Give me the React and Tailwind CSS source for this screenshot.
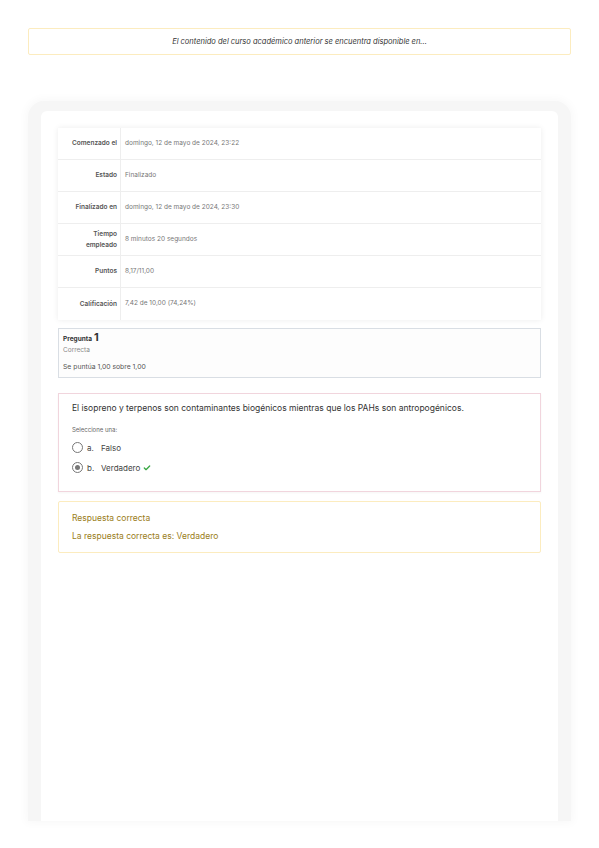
import { Check } from 'lucide-react';

const rows = [
  { label: 'Comenzado el', value: 'domingo, 12 de mayo de 2024, 23:22' },
  { label: 'Estado', value: 'Finalizado' },
  { label: 'Finalizado en', value: 'domingo, 12 de mayo de 2024, 23:30' },
  { label: 'Tiempo empleado', value: '8 minutos 20 segundos' },
  { label: 'Puntos', value: '8,17/11,00' },
  { label: 'Calificación', value: '7,42 de 10,00 (74,24%)' },
];

const Radio = ({ checked }) => (
  <span className="w-[11px] h-[11px] rounded-full border border-[#777] flex items-center justify-center bg-white">
    {checked && <span className="w-[5px] h-[5px] rounded-full bg-[#777]" />}
  </span>
);

export default function App() {
  return (
    <div
      className="w-full min-h-[848px] bg-white pt-[28px]"
      style={{ fontFamily: 'Inter, "Noto Sans", sans-serif' }}
    >
      <div className="mx-[28px] h-[27px] border border-[#fcecbf] rounded-[2px] flex items-center justify-center">
        <span className="text-[7.5px] italic text-[#333]">
          El contenido del curso académico anterior se encuentra disponible en...
        </span>
      </div>

      <div className="mx-[28px] mt-[46px] h-[720px] rounded-t-[16px] bg-[#f6f6f6] px-[13px] pt-[10px] shadow-[0_0_10px_2px_rgba(0,0,0,0.03)]">
        <div className="h-full bg-white rounded-t-[6px] p-[17px]">
          <div className="bg-white shadow-[0_0_6px_rgba(0,0,0,0.08)]">
            {rows.map((r, i) => (
              <div
                key={r.label}
                className={`flex h-[32px] ${i < rows.length - 1 ? 'border-b border-[#eeeeee]' : ''}`}
              >
                <div className="w-[63px] shrink-0 border-r border-[#eeeeee] flex items-center justify-end pr-[3px] text-right text-[6.5px] leading-[11px] font-semibold text-[#555]">
                  {r.label === 'Tiempo empleado' ? (
                    <span>Tiempo<br />empleado</span>
                  ) : (
                    r.label
                  )}
                </div>
                <div className="flex items-center pl-[4px] text-[6.5px] text-[#777]">
                  {r.value}
                </div>
              </div>
            ))}
          </div>

          <div className="mt-[8px] h-[50px] border border-[#d9dee4] bg-[#fdfdfd] px-[4px] pt-[2px]">
            <div className="flex items-baseline gap-[2px] text-[#333]">
              <span className="text-[6.5px] font-bold">Pregunta</span>
              <span className="text-[11px] font-bold leading-[12px]">1</span>
            </div>
            <div className="text-[6.5px] text-[#888] mt-[1px]">Correcta</div>
            <div className="text-[6.8px] text-[#555] mt-[6px]">Se puntúa 1,00 sobre 1,00</div>
          </div>

          <div className="mt-[15px] h-[99px] border border-[#f1d5dd] bg-white px-[13px] pt-[8px] shadow-[0_1px_2px_rgba(0,0,0,0.04)]">
            <div className="text-[8.5px] text-[#333]">
              El isopreno y terpenos son contaminantes biogénicos mientras que los PAHs son antropogénicos.
            </div>
            <div className="text-[6px] text-[#666] mt-[10px]">Seleccione una:</div>
            <div className="flex items-center gap-[4px] mt-[8px] text-[8px] text-[#444]">
              <Radio />
              <span className="w-[10px]">a.</span>
              <span>Falso</span>
            </div>
            <div className="flex items-center gap-[4px] mt-[8px] text-[8px] text-[#444]">
              <Radio checked />
              <span className="w-[10px]">b.</span>
              <span>Verdadero</span>
              <Check className="w-[8px] h-[8px] text-[#3aa845] -ml-[1px]" strokeWidth={4} />
            </div>
          </div>

          <div className="mt-[9px] h-[52px] border border-[#fcecbf] rounded-[2px] bg-white px-[13px] pt-[10px] text-[8.5px] text-[#9a7d20]">
            <div>Respuesta correcta</div>
            <div className="mt-[5px]">La respuesta correcta es: Verdadero</div>
          </div>
        </div>
      </div>
    </div>
  );
}
